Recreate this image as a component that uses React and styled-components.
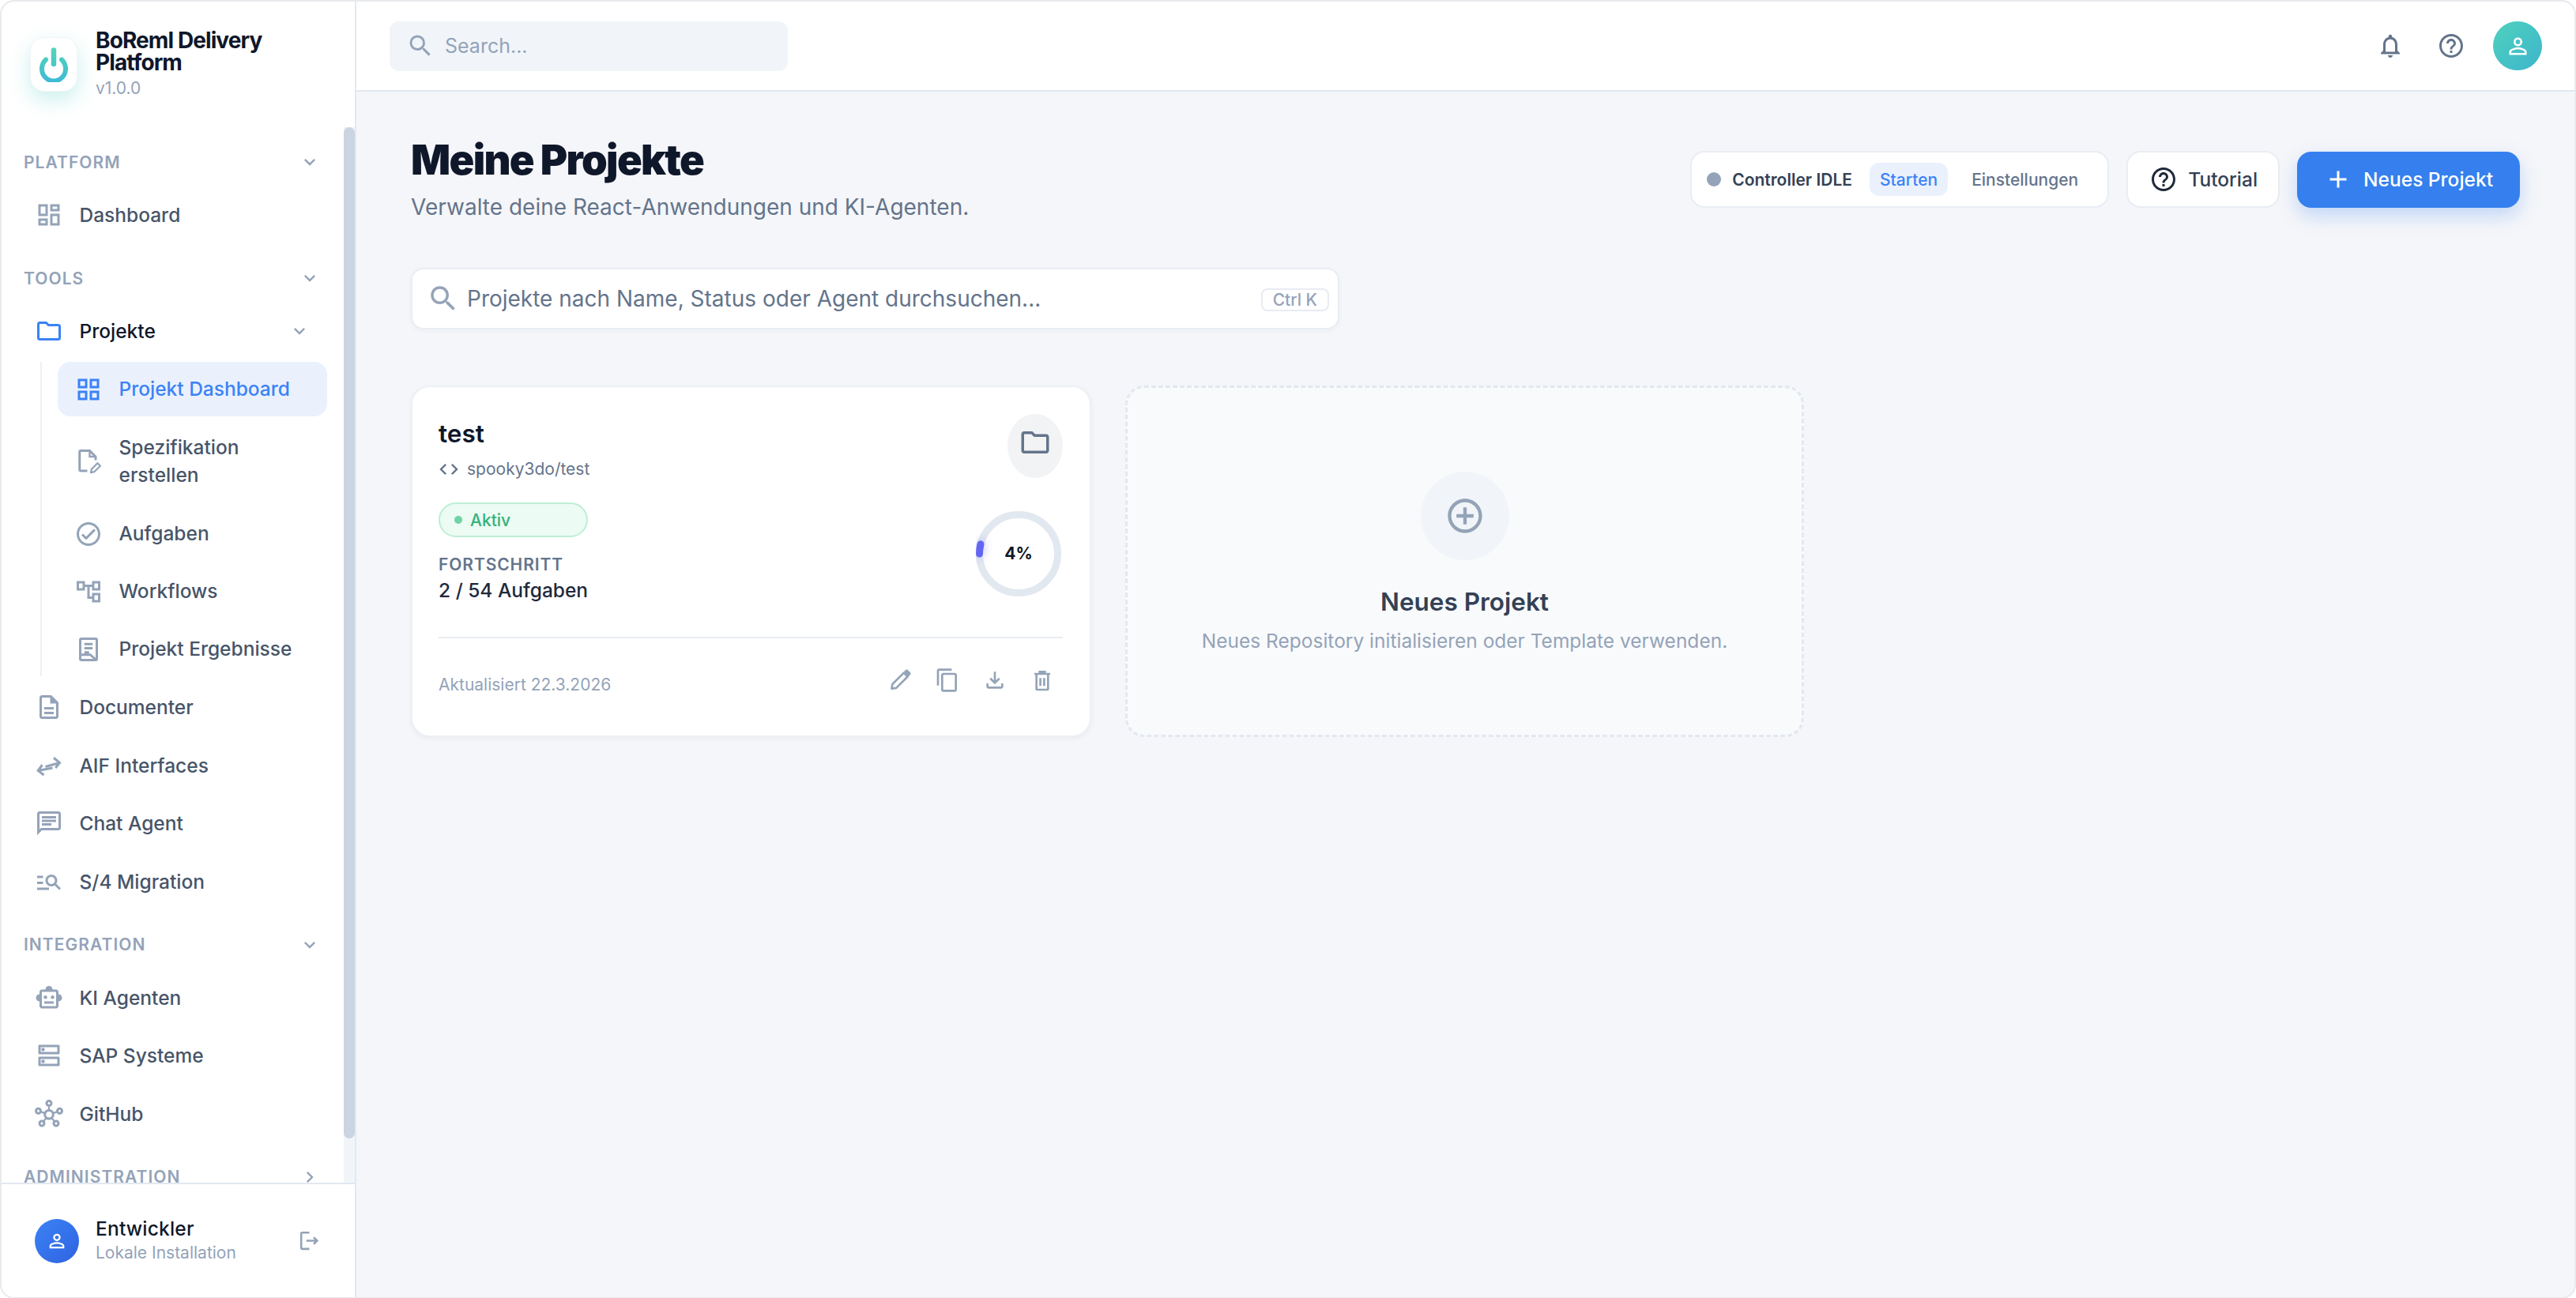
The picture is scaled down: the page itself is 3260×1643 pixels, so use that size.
import React from "react";
import styled, { createGlobalStyle } from "styled-components";
import {
  MdAdd,
  MdChevronRight,
  MdCode,
  MdExpandMore,
  MdOutlineAccountTree,
  MdOutlineAddCircleOutline,
  MdOutlineChat,
  MdOutlineCheckCircle,
  MdOutlineContentCopy,
  MdOutlineDashboard,
  MdOutlineDescription,
  MdOutlineDns,
  MdOutlineFileDownload,
  MdOutlineFolder,
  MdOutlineGridView,
  MdOutlineHelpOutline,
  MdOutlineHub,
  MdOutlineLogout,
  MdOutlineManageSearch,
  MdOutlineNotifications,
  MdOutlinePersonOutline,
  MdOutlineSmartToy,
  MdSearch,
} from "react-icons/md";

const GlobalStyle = createGlobalStyle`
  html, body {
    margin: 0;
    height: 100%;
    overflow: hidden;
    background: #fff;
  }
  body {
    font-family: Inter, "Noto Sans", sans-serif;
    color: #0f172a;
  }
  * {
    box-sizing: border-box;
  }
`;

const Frame = styled.div`
  display: flex;
  width: 100vw;
  height: calc(100vh + 1px);
  border: 2px solid #e8eaee;
  border-radius: 18px;
  overflow: hidden;
  background: #f5f6f9;
`;

const Sidebar = styled.aside`
  display: flex;
  flex-direction: column;
  flex: 0 0 449px;
  background: #fff;
  border-right: 2px solid #e2e8f0;
`;

const Brand = styled.div`
  display: flex;
  align-items: center;
  flex: 0 0 159px;
  gap: 23px;
  padding-left: 36px;
`;

const LogoBox = styled.div`
  display: flex;
  align-items: center;
  justify-content: center;
  width: 60px;
  height: 69px;
  background: #fff;
  border: 1px solid #f1f5f9;
  border-radius: 18px;
  box-shadow: 0 10px 26px rgba(78, 205, 196, 0.3);
`;

const BrandName = styled.div`
  width: 260px;
  font-size: 28px;
  line-height: 28px;
  font-weight: 700;
  letter-spacing: -0.9px;
`;

const BrandVersion = styled.div`
  margin-top: 5px;
  font-size: 21px;
  line-height: 28px;
  color: #94a3b8;
`;

const NavArea = styled.div`
  position: relative;
  flex: 1;
  min-height: 0;
`;

const NavScroll = styled.nav`
  height: 100%;
  margin-right: 14px;
  overflow: hidden;
  padding: 26px 0 45px;
`;

const ScrollTrack = styled.div`
  position: absolute;
  top: 0;
  right: 0;
  bottom: 0;
  width: 14px;
  background: #f1f5f9;
`;

const ScrollThumb = styled.div`
  height: 1280px;
  border-radius: 7px;
  background: #cbd5e1;
`;

const SectionHead = styled.div`
  display: flex;
  align-items: center;
  justify-content: space-between;
  height: 36px;
  margin: ${(p) => (p.$first ? "0" : "27.5px")} 29px 14.5px 28px;
  font-size: 21px;
  font-weight: 600;
  letter-spacing: 1.05px;
  color: #94a3b8;
  text-transform: uppercase;

  svg {
    font-size: 28px;
    color: #94a3b8;
  }
`;

const NavList = styled.div`
  display: flex;
  flex-direction: column;
  gap: 4.5px;
`;

const NavRow = styled.div`
  display: flex;
  align-items: center;
  gap: 21px;
  min-height: 69px;
  margin: 0 21px 0 12px;
  padding: 0 21px 0 29.5px;
  font-size: 24.5px;
  font-weight: 500;
  color: ${(p) => (p.$open ? "#0f172a" : "#475569")};

  svg {
    flex: 0 0 36px;
    font-size: 36px;
    color: ${(p) => (p.$open ? "#3b82f6" : "#94a3b8")};
  }
`;

const RowLabel = styled.span`
  flex: 1;
`;

const RowChevron = styled(MdExpandMore)`
  && {
    flex: 0 0 28px;
    font-size: 28px;
    color: #94a3b8;
  }
`;

const SubList = styled.div`
  display: flex;
  flex-direction: column;
  gap: 4px;
  margin: 0 21px 0 49px;
  padding-left: 20px;
  border-left: 2px solid #edf1f5;
`;

const SubRow = styled.div`
  display: flex;
  align-items: center;
  gap: 21px;
  min-height: 69px;
  padding: ${(p) => (p.$tall ? "18px 20px 18px 20.5px" : "0 20px 0 20.5px")};
  border-radius: 16px;
  font-size: 24.5px;
  line-height: 35px;
  font-weight: 500;
  color: ${(p) => (p.$active ? "#3b82f6" : "#475569")};
  background: ${(p) => (p.$active ? "#eaf1fd" : "transparent")};

  svg {
    flex: 0 0 36px;
    font-size: 36px;
    color: ${(p) => (p.$active ? "#3b82f6" : "#94a3b8")};
  }
`;

const UserBar = styled.div`
  display: flex;
  align-items: center;
  flex: 0 0 145px;
  gap: 21px;
  padding: 0 42px;
  border-top: 2px solid #e2e8f0;
`;

const UserAvatar = styled.div`
  display: flex;
  align-items: center;
  justify-content: center;
  flex: 0 0 ${(p) => p.$size}px;
  height: ${(p) => p.$size}px;
  border-radius: 50%;
  color: #fff;
  font-size: ${(p) => p.$icon}px;
  background: ${(p) => p.$bg};
`;

const UserText = styled.div`
  flex: 1;
`;

const UserName = styled.div`
  font-size: 24.5px;
  line-height: 30px;
  font-weight: 500;
  letter-spacing: 0.2px;
`;

const UserRole = styled.div`
  margin-top: 1px;
  font-size: 21px;
  line-height: 30px;
  color: #94a3b8;
`;

const Main = styled.main`
  display: flex;
  flex-direction: column;
  flex: 1;
  min-width: 0;
`;

const TopBar = styled.header`
  display: flex;
  align-items: center;
  flex: 0 0 114px;
  padding: 0 41px 0 42px;
  background: #fff;
  border-bottom: 2px solid #e2e8f0;
`;

const TopSearch = styled.div`
  display: flex;
  align-items: center;
  gap: 13px;
  width: 504px;
  height: 63px;
  padding-left: 21px;
  border-radius: 12px;
  background: #f1f5f9;
  font-size: 25px;
  color: #94a3b8;

  svg {
    font-size: 36px;
  }
`;

const TopIcons = styled.div`
  display: flex;
  align-items: center;
  margin-left: auto;
`;

const TopIcon = styled.span`
  display: flex;
  margin-right: ${(p) => p.$gap}px;
  font-size: 36px;
  color: #64748b;
`;

const Content = styled.div`
  padding: 56px 69px 0 69px;
`;

const PageHead = styled.div`
  display: flex;
  justify-content: space-between;
`;

const PageTitle = styled.h1`
  margin: 0;
  font-size: 52.5px;
  line-height: 60px;
  font-weight: 900;
  letter-spacing: -1.7px;
  color: #0f172a;
`;

const PageSub = styled.p`
  margin: 12px 0 0;
  font-size: 28px;
  line-height: 36px;
  color: #64748b;
`;

const Controls = styled.div`
  display: flex;
  align-items: center;
  gap: 22px;
  height: 72px;
  margin-top: 19px;
`;

const ControllerPill = styled.div`
  display: flex;
  align-items: center;
  width: 530px;
  height: 72px;
  padding-left: 19px;
  background: #fff;
  border: 2px solid #e9edf3;
  border-radius: 18px;
  font-size: 21px;
  font-weight: 500;
`;

const StatusDot = styled.span`
  width: 18px;
  height: 18px;
  margin-right: 14px;
  border-radius: 50%;
  background: #94a3b8;
`;

const StatusText = styled.span`
  font-weight: 600;
  color: #334155;
`;

const PillTab = styled.span`
  display: flex;
  align-items: center;
  height: 42px;
  margin-left: ${(p) => (p.$active ? 22 : 30)}px;
  padding: 0 ${(p) => (p.$active ? 13 : 0)}px;
  border-radius: 12px;
  color: ${(p) => (p.$active ? "#3b82f6" : "#64748b")};
  background: ${(p) => (p.$active ? "#eaf1fd" : "transparent")};
`;

const GhostButton = styled.button`
  display: flex;
  align-items: center;
  gap: 13.5px;
  height: 72px;
  padding: 0 26px 0 26.5px;
  background: #fff;
  border: 2px solid #e9edf3;
  border-radius: 18px;
  font: 500 24.5px Inter, sans-serif;
  color: #334155;

  svg {
    font-size: 36px;
    color: #1e293b;
  }
`;

const PrimaryButton = styled.button`
  display: flex;
  align-items: center;
  gap: 14.5px;
  height: 71px;
  padding: 0 34px 0 33.5px;
  background: #3580ee;
  border: 0;
  border-radius: 18px;
  box-shadow: 0 10px 24px rgba(59, 130, 246, 0.28);
  font: 500 24.5px Inter, sans-serif;
  color: #fff;

  svg {
    font-size: 36px;
  }
`;

const ProjectSearch = styled.div`
  display: flex;
  align-items: center;
  gap: 9px;
  width: 1175px;
  height: 78px;
  margin-top: 59px;
  padding: 0 11px 0 18px;
  background: #fff;
  border: 2px solid #e9edf3;
  border-radius: 16px;
  box-shadow: 0 2px 6px rgba(15, 23, 42, 0.04);
  font-size: 28px;
  color: #64748b;

  svg {
    font-size: 42px;
    color: #94a3b8;
  }
`;

const SearchHint = styled.span`
  flex: 1;
`;

const KeyChip = styled.span`
  height: 29px;
  margin-top: 2px;
  padding: 0 13px;
  border: 2px solid #e8ebf3;
  border-radius: 8px;
  font-size: 21px;
  line-height: 25px;
  font-weight: 500;
  color: #94a3b8;
`;

const CardGrid = styled.div`
  display: grid;
  grid-template-columns: repeat(3, 1fr);
  gap: 43px;
  margin-top: 71px;
`;

const ProjectCard = styled.article`
  height: 445px;
  padding: 34px 34px 34px 33px;
  background: #fff;
  border: 2px solid #edf0f5;
  border-radius: 24px;
  box-shadow: 0 2px 6px rgba(15, 23, 42, 0.05);
`;

const CardTop = styled.div`
  display: flex;
  justify-content: space-between;
  height: 81px;
`;

const CardTitle = styled.h3`
  margin: 5px 0 0;
  font-size: 31.5px;
  line-height: 40px;
  font-weight: 600;
`;

const RepoLine = styled.div`
  display: flex;
  align-items: center;
  gap: 9px;
  margin-top: 10px;
  margin-left: -1px;
  font-size: 21px;
  line-height: 30px;
  color: #64748b;

  svg {
    font-size: 28px;
  }
`;

const FolderButton = styled.div`
  display: flex;
  align-items: center;
  justify-content: center;
  width: 70px;
  height: 81px;
  padding-bottom: 10px;
  border-radius: 50%;
  background: #f2f3f5;
  font-size: 42px;
  color: #64748b;
`;

const ProgressRow = styled.div`
  display: flex;
  align-items: center;
  justify-content: space-between;
  margin-top: 31px;
  padding-bottom: 41px;
  border-bottom: 2px solid #e8edf3;
`;

const ProgressText = styled.div`
  display: flex;
  flex-direction: column;
`;

const StatusBadge = styled.div`
  display: flex;
  align-items: center;
  gap: 10px;
  height: 44px;
  padding-left: 18px;
  border: 2px solid #bdeed6;
  border-radius: 22px;
  background: #ecfbf3;
  font-size: 21px;
  font-weight: 500;
  color: #34b27b;
`;

const BadgeDot = styled.span`
  width: 10px;
  height: 10px;
  border-radius: 50%;
  background: #6ed3a5;
`;

const ProgressLabel = styled.div`
  margin-top: 21px;
  font-size: 21px;
  line-height: 28px;
  font-weight: 600;
  letter-spacing: 0.9px;
  color: #64748b;
`;

const ProgressValue = styled.div`
  font-size: 24.5px;
  line-height: 36px;
  font-weight: 500;
  color: #1e293b;
`;

const RingWrap = styled.div`
  position: relative;
  width: 108px;
  height: 108px;
  margin-right: 2px;
`;

const RingLabel = styled.span`
  position: absolute;
  inset: 0;
  display: flex;
  align-items: center;
  justify-content: center;
  font-size: 21px;
  font-weight: 700;
`;

const RingArc = styled.circle`
  filter: drop-shadow(0 0 6px rgba(99, 102, 241, 0.45));
`;

const CardFoot = styled.div`
  display: flex;
  align-items: center;
  justify-content: space-between;
  padding: 32px 10px 0 0;
`;

const DateText = styled.span`
  margin-top: 12px;
  font-size: 21px;
  line-height: 30px;
  color: #94a3b8;
`;

const ActionIcons = styled.div`
  display: flex;
  gap: 28px;
  font-size: 32px;
  color: #94a3b8;

  svg {
    display: block;
  }
`;

const NewCard = styled.div`
  display: flex;
  flex-direction: column;
  align-items: center;
  height: 445px;
  margin-right: 2px;
  padding-top: 106px;
  background: #f9fafc;
  border: 3px dashed #e2e8f0;
  border-radius: 24px;
`;

const PlusCircle = styled.div`
  display: flex;
  align-items: center;
  justify-content: center;
  width: 112px;
  height: 112px;
  border-radius: 50%;
  background: #f1f5f9;
  font-size: 52px;
  color: #94a3b8;
`;

const NewTitle = styled.div`
  margin-top: 33px;
  font-size: 31.5px;
  line-height: 40px;
  font-weight: 600;
  color: #334155;
`;

const NewHint = styled.div`
  margin-top: 11px;
  font-size: 24.5px;
  line-height: 36px;
  color: #94a3b8;
`;

const PowerLogo = () => (
  <svg width="36" height="44" viewBox="0 0 36 44" fill="none">
    <defs>
      <linearGradient id="powerGrad" x1="0" y1="0" x2="0" y2="44" gradientUnits="userSpaceOnUse">
        <stop offset="0" stopColor="#52d6b8" />
        <stop offset="1" stopColor="#3fb9d6" />
      </linearGradient>
    </defs>
    <path d="M18 3.5V21" stroke="url(#powerGrad)" strokeWidth="6.5" strokeLinecap="round" />
    <path d="M8 15.5a15 15.5 0 1 0 20 0" stroke="url(#powerGrad)" strokeWidth="6" strokeLinecap="round" />
  </svg>
);

const SpecIcon = () => (
  <svg width="1em" height="1em" viewBox="0 0 24 24" fill="none" stroke="currentColor">
    <path d="M11 20H5.5a1 1 0 0 1-1-1V4a1 1 0 0 1 1-1H13l5 5v3" strokeWidth="2" />
    <path d="M13 3.5V8h4.5" strokeWidth="1.6" />
    <path d="M14 21.5l.6-3 5-5 2.3 2.3-5 5-2.9.7z" strokeWidth="1.5" strokeLinejoin="round" />
  </svg>
);

const ResultIcon = () => (
  <svg width="1em" height="1em" viewBox="0 0 24 24" fill="none" stroke="currentColor" strokeWidth="2">
    <path d="M6 3h12a1 1 0 0 1 1 1v16a1 1 0 0 1-1 1H6a1 1 0 0 1-1-1V4a1 1 0 0 1 1-1z" />
    <path d="M8.5 7.5h7M8.5 11h7M8.5 14.5h4M5 16.5h8.5l5 4.5" />
  </svg>
);

const SwapIcon = () => (
  <svg width="1em" height="1em" viewBox="0 0 24 24" fill="none" stroke="currentColor" strokeWidth="2">
    <path d="M9 13l12-3.3M16 5.5l5 4.2-3.5 4.3" />
    <path d="M15 14L2.8 16.3M6.3 11.5l-3.5 4.8L7.7 20" />
  </svg>
);

const PencilIcon = () => (
  <svg width="1em" height="1em" viewBox="0 0 24 24" fill="none" stroke="currentColor" strokeWidth="2" strokeLinejoin="round">
    <path d="M4 20l.8-4.2L15.6 5l3.6 3.6L8.4 19.4z" />
    <path d="M17 3.8l1.4-1 2.8 2.8-1 1.6z" fill="currentColor" />
  </svg>
);

const TrashIcon = () => (
  <svg width="1em" height="1em" viewBox="0 0 24 24" fill="none" stroke="currentColor" strokeWidth="2">
    <path d="M4.5 6h15M9.5 6V4h5v2" />
    <path d="M6.5 6v14a1 1 0 0 0 1 1h9a1 1 0 0 0 1-1V6" />
    <path d="M10.2 10v7.5M13.8 10v7.5" />
  </svg>
);

const Section = ({ title, closed, first, children }) => (
  <>
    <SectionHead $first={first}>
      {title}
      {closed ? <MdChevronRight /> : <MdExpandMore />}
    </SectionHead>
    {children}
  </>
);

export default function App() {
  return (
    <>
      <GlobalStyle />
      <Frame>
        <Sidebar>
          <Brand>
            <LogoBox>
              <PowerLogo />
            </LogoBox>
            <div>
              <BrandName>BoReml Delivery Platform</BrandName>
              <BrandVersion>v1.0.0</BrandVersion>
            </div>
          </Brand>
          <NavArea>
            <NavScroll>
              <Section title="Platform" first>
                <NavList>
                  <NavRow>
                    <MdOutlineDashboard />
                    Dashboard
                  </NavRow>
                </NavList>
              </Section>
              <Section title="Tools">
                <NavList>
                  <NavRow $open>
                    <MdOutlineFolder />
                    <RowLabel>Projekte</RowLabel>
                    <RowChevron />
                  </NavRow>
                  <SubList>
                    <SubRow $active>
                      <MdOutlineGridView />
                      Projekt Dashboard
                    </SubRow>
                    <SubRow $tall>
                      <SpecIcon />
                      Spezifikation erstellen
                    </SubRow>
                    <SubRow>
                      <MdOutlineCheckCircle />
                      Aufgaben
                    </SubRow>
                    <SubRow>
                      <MdOutlineAccountTree />
                      Workflows
                    </SubRow>
                    <SubRow>
                      <ResultIcon />
                      Projekt Ergebnisse
                    </SubRow>
                  </SubList>
                  <NavRow>
                    <MdOutlineDescription />
                    Documenter
                  </NavRow>
                  <NavRow>
                    <SwapIcon />
                    AIF Interfaces
                  </NavRow>
                  <NavRow>
                    <MdOutlineChat />
                    Chat Agent
                  </NavRow>
                  <NavRow>
                    <MdOutlineManageSearch />
                    S/4 Migration
                  </NavRow>
                </NavList>
              </Section>
              <Section title="Integration">
                <NavList>
                  <NavRow>
                    <MdOutlineSmartToy />
                    KI Agenten
                  </NavRow>
                  <NavRow>
                    <MdOutlineDns />
                    SAP Systeme
                  </NavRow>
                  <NavRow>
                    <MdOutlineHub />
                    GitHub
                  </NavRow>
                </NavList>
              </Section>
              <Section title="Administration" closed />
            </NavScroll>
            <ScrollTrack>
              <ScrollThumb />
            </ScrollTrack>
          </NavArea>
          <UserBar>
            <UserAvatar $size={56} $icon={28} $bg="linear-gradient(135deg, #3b82f6, #2f63e0)">
              <MdOutlinePersonOutline />
            </UserAvatar>
            <UserText>
              <UserName>Entwickler</UserName>
              <UserRole>Lokale Installation</UserRole>
            </UserText>
            <TopIcon $gap={0}>
              <MdOutlineLogout color="#94a3b8" size={31} />
            </TopIcon>
          </UserBar>
        </Sidebar>
        <Main>
          <TopBar>
            <TopSearch>
              <MdSearch />
              Search...
            </TopSearch>
            <TopIcons>
              <TopIcon $gap={41}>
                <MdOutlineNotifications />
              </TopIcon>
              <TopIcon $gap={35}>
                <MdOutlineHelpOutline />
              </TopIcon>
              <UserAvatar $size={62} $icon={33} $bg="linear-gradient(135deg, #4fd1bd, #3db5cc)">
                <MdOutlinePersonOutline />
              </UserAvatar>
            </TopIcons>
          </TopBar>
          <Content>
            <PageHead>
              <div>
                <PageTitle>Meine Projekte</PageTitle>
                <PageSub>Verwalte deine React-Anwendungen und KI-Agenten.</PageSub>
              </div>
              <Controls>
                <ControllerPill>
                  <StatusDot />
                  <StatusText>Controller IDLE</StatusText>
                  <PillTab $active>Starten</PillTab>
                  <PillTab>Einstellungen</PillTab>
                </ControllerPill>
                <GhostButton>
                  <MdOutlineHelpOutline />
                  Tutorial
                </GhostButton>
                <PrimaryButton>
                  <MdAdd />
                  Neues Projekt
                </PrimaryButton>
              </Controls>
            </PageHead>
            <ProjectSearch>
              <MdSearch />
              <SearchHint>Projekte nach Name, Status oder Agent durchsuchen...</SearchHint>
              <KeyChip>Ctrl K</KeyChip>
            </ProjectSearch>
            <CardGrid>
              <ProjectCard>
                <CardTop>
                  <div>
                    <CardTitle>test</CardTitle>
                    <RepoLine>
                      <MdCode />
                      spooky3do/test
                    </RepoLine>
                  </div>
                  <FolderButton>
                    <MdOutlineFolder />
                  </FolderButton>
                </CardTop>
                <ProgressRow>
                  <ProgressText>
                    <StatusBadge>
                      <BadgeDot />
                      Aktiv
                    </StatusBadge>
                    <ProgressLabel>FORTSCHRITT</ProgressLabel>
                    <ProgressValue>2 / 54 Aufgaben</ProgressValue>
                  </ProgressText>
                  <RingWrap>
                    <svg width="108" height="108" viewBox="0 0 108 108" fill="none">
                      <circle cx="54" cy="54" r="49.5" stroke="#e2e8f0" strokeWidth="9" />
                      <RingArc
                        cx="54"
                        cy="54"
                        r="49.5"
                        stroke="#6366f1"
                        strokeWidth="9"
                        strokeLinecap="round"
                        strokeDasharray="12.4 300"
                        transform="rotate(180 54 54)"
                      />
                    </svg>
                    <RingLabel>4%</RingLabel>
                  </RingWrap>
                </ProgressRow>
                <CardFoot>
                  <DateText>Aktualisiert 22.3.2026</DateText>
                  <ActionIcons>
                    <PencilIcon />
                    <MdOutlineContentCopy />
                    <MdOutlineFileDownload />
                    <TrashIcon />
                  </ActionIcons>
                </CardFoot>
              </ProjectCard>
              <NewCard>
                <PlusCircle>
                  <MdOutlineAddCircleOutline />
                </PlusCircle>
                <NewTitle>Neues Projekt</NewTitle>
                <NewHint>Neues Repository initialisieren oder Template verwenden.</NewHint>
              </NewCard>
            </CardGrid>
          </Content>
        </Main>
      </Frame>
    </>
  );
}
